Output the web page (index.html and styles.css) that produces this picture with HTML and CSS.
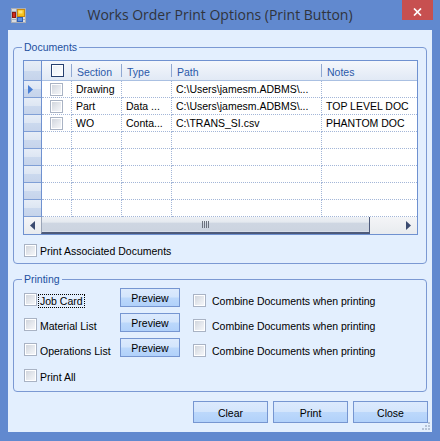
FILE: index.html
```html
<!DOCTYPE html>
<html>
<head>
<meta charset="utf-8">
<title>Works Order Print Options (Print Button)</title>
<link rel="stylesheet" href="styles.css">
</head>
<body>
<div class="window">
  <div class="titlebar">
    <div class="tleft">
      <svg class="appicon" width="15" height="15" viewBox="0 0 15 15">
        <rect x="0.5" y="0.5" width="14" height="14" fill="#d8dbe0" stroke="#a9aeb8"/>
        <line x1="5.5" y1="0.5" x2="5.5" y2="14.5" stroke="#a9aeb8"/>
        <line x1="0.5" y1="11.5" x2="14.5" y2="11.5" stroke="#a9aeb8"/>
        <line x1="0.5" y1="3.5" x2="5.5" y2="3.5" stroke="#a9aeb8"/>
        <rect x="1.5" y="4.5" width="3" height="5" fill="#d22a1e" stroke="#8a1a12"/>
        <rect x="6.5" y="1.5" width="7" height="7" fill="#f6c21c" stroke="#c98a10"/>
        <rect x="7.5" y="2.5" width="4" height="3" fill="#fde27a"/>
        <rect x="6.5" y="9.5" width="5" height="4" fill="#5b8fe0" stroke="#2f5fb8"/>
      </svg>
    </div>
    <div class="title">Works Order Print Options (Print Button)</div>
    <div class="tright">
      <div class="close">
        <svg width="9" height="8" viewBox="0 0 9 8">
          <path d="M1 0.5 L8 7.5 M8 0.5 L1 7.5" stroke="#fff" stroke-width="1.7" fill="none"/>
        </svg>
      </div>
    </div>
  </div>

  <div class="client">
    <div class="group docs">
      <div class="legend">Documents</div>
      <div class="grid">
        <div class="row hdr">
          <div class="c rh"></div>
          <div class="c ck sep"><span class="cb cbh"></span></div>
          <div class="c sec sep">Section</div>
          <div class="c typ sep">Type</div>
          <div class="c pth sep">Path</div>
          <div class="c nts">Notes</div>
        </div>
        <div class="row">
          <div class="c rh"><svg width="5" height="9" viewBox="0 0 5 9"><path d="M0 0 L5 4.5 L0 9 Z" fill="#4a7fd4"/></svg></div>
          <div class="c ck"><span class="cb"></span></div>
          <div class="c sec">Drawing</div>
          <div class="c typ"></div>
          <div class="c pth">C:\Users\jamesm.ADBMS\...</div>
          <div class="c nts"></div>
        </div>
        <div class="row">
          <div class="c rh"></div>
          <div class="c ck"><span class="cb"></span></div>
          <div class="c sec">Part</div>
          <div class="c typ">Data ...</div>
          <div class="c pth">C:\Users\jamesm.ADBMS\...</div>
          <div class="c nts">TOP LEVEL DOC</div>
        </div>
        <div class="row">
          <div class="c rh"></div>
          <div class="c ck"><span class="cb"></span></div>
          <div class="c sec">WO</div>
          <div class="c typ">Conta...</div>
          <div class="c pth">C:\TRANS_SI.csv</div>
          <div class="c nts">PHANTOM DOC</div>
        </div>
        <div class="row"><div class="c rh"></div><div class="c ck"></div><div class="c sec"></div><div class="c typ"></div><div class="c pth"></div><div class="c nts"></div></div>
        <div class="row"><div class="c rh"></div><div class="c ck"></div><div class="c sec"></div><div class="c typ"></div><div class="c pth"></div><div class="c nts"></div></div>
        <div class="row"><div class="c rh"></div><div class="c ck"></div><div class="c sec"></div><div class="c typ"></div><div class="c pth"></div><div class="c nts"></div></div>
        <div class="row"><div class="c rh"></div><div class="c ck"></div><div class="c sec"></div><div class="c typ"></div><div class="c pth"></div><div class="c nts"></div></div>
        <div class="row"><div class="c rh"></div><div class="c ck"></div><div class="c sec"></div><div class="c typ"></div><div class="c pth"></div><div class="c nts"></div></div>
        <div class="hscroll">
          <div class="sbtn"><svg width="5" height="9" viewBox="0 0 5 9"><path d="M5 0 L0 4.5 L5 9 Z" fill="#3b4b70"/></svg></div>
          <div class="thumb">
            <svg width="7" height="7" viewBox="0 0 7 7">
              <rect x="0" y="0" width="1" height="7" fill="#6b717d"/>
              <rect x="2" y="0" width="1" height="7" fill="#6b717d"/>
              <rect x="4" y="0" width="1" height="7" fill="#6b717d"/>
              <rect x="6" y="0" width="1" height="7" fill="#6b717d"/>
            </svg>
          </div>
          <div class="track"><svg width="5" height="9" viewBox="0 0 5 9"><path d="M0 0 L5 4.5 L0 9 Z" fill="#3b4b70"/></svg></div>
        </div>
      </div>
      <div class="assoc">
        <span class="cb"></span><span class="lbl">Print Associated Documents</span>
      </div>
    </div>

    <div class="group printing">
      <div class="legend">Printing</div>
      <div class="prow">
        <div class="opt"><span class="cb"></span><span class="lbl focus">Job Card</span></div>
        <div class="btn prev">Preview</div>
        <div class="opt2"><span class="cb"></span><span class="lbl">Combine Documents when printing</span></div>
      </div>
      <div class="prow">
        <div class="opt"><span class="cb"></span><span class="lbl">Material List</span></div>
        <div class="btn prev">Preview</div>
        <div class="opt2"><span class="cb"></span><span class="lbl">Combine Documents when printing</span></div>
      </div>
      <div class="prow">
        <div class="opt"><span class="cb"></span><span class="lbl">Operations List</span></div>
        <div class="btn prev">Preview</div>
        <div class="opt2"><span class="cb"></span><span class="lbl">Combine Documents when printing</span></div>
      </div>
      <div class="prow last">
        <div class="opt"><span class="cb"></span><span class="lbl">Print All</span></div>
      </div>
    </div>

    <div class="buttons">
      <div class="btn big">Clear</div>
      <div class="btn big">Print</div>
      <div class="btn big">Close</div>
    </div>

    <svg class="grip" width="8" height="8" viewBox="0 0 8 8">
      <rect x="6" y="0" width="2" height="2" fill="#b6c3d6"/>
      <rect x="3" y="3" width="2" height="2" fill="#b6c3d6"/>
      <rect x="6" y="3" width="2" height="2" fill="#b6c3d6"/>
      <rect x="0" y="6" width="2" height="2" fill="#b6c3d6"/>
      <rect x="3" y="6" width="2" height="2" fill="#b6c3d6"/>
      <rect x="6" y="6" width="2" height="2" fill="#b6c3d6"/>
    </svg>
  </div>
</div>
</body>
</html>
```

FILE: styles.css
```css
* { box-sizing: border-box; }
html, body { margin: 0; padding: 0; }
body {
  width: 440px;
  height: 441px;
  overflow: hidden;
  font-family: "Liberation Sans", Arial, sans-serif;
  font-size: 10.5px;
  color: #000;
  background: #6189cf;
}
.window {
  width: 440px;
  height: 441px;
  background: #6189cf;
  display: flex;
  flex-direction: column;
}
.titlebar {
  height: 30px;
  display: grid;
  grid-template-columns: 1fr auto 1fr;
  align-items: start;
}
.appicon { display: block; margin: 8px 0 0 11px; }
.title {
  font-family: "Open Sans", "Noto Sans", sans-serif;
  font-size: 14px;
  line-height: 20px;
  margin-top: 5px;
  color: #30343c;
  white-space: nowrap;
}
.tright { display: flex; justify-content: flex-end; }
.close {
  width: 31px;
  height: 20px;
  margin-right: 7px;
  background: #c75050;
  display: flex;
  justify-content: center;
  padding-top: 8px;
}
.close svg { display: block; }

.client {
  position: relative;
  margin: 0 8px;
  height: 402px;
  background: #e3effe;
  padding: 17px 4px 0 5px;
}

.group {
  position: relative;
  width: 414px;
  border: 1px solid #7b99d3;
  border-radius: 4px;
}
.legend {
  position: absolute;
  top: -7px;
  left: 8px;
  padding: 0 2px;
  background: #e3effe;
  color: #1d4f9e;
  line-height: 13px;
  white-space: nowrap;
}
.docs {
  height: 217px;
  padding: 12px 0 0 9px;
}

/* data grid */
.grid {
  width: 395px;
  border: 1px solid #6f91d0;
  background: #fff;
}
.row {
  display: grid;
  grid-template-columns: 18px 30px 50px 50px 150px 95px;
  height: 17px;
}
.c {
  border-right: 1px dotted #a3b6d8;
  border-bottom: 1px dotted #a3b6d8;
  padding-left: 4px;
  line-height: 16px;
  white-space: nowrap;
  overflow: hidden;
}
.c.nts { border-right: none; }
.c.rh {
  padding: 0;
  border-right: 1px solid #6f91d0;
  border-bottom: 1px solid #7f9fd6;
  background: linear-gradient(#e6edf7 0%, #dde6f3 50%, #cbd9ee 52%, #c6d4eb 100%);
  display: flex;
  align-items: center;
  padding-left: 4px;
}
.c.rh svg { display: block; }
.c.ck {
  padding: 0;
  display: flex;
  justify-content: center;
  align-items: center;
  padding-right: 1px;
}
.row.hdr { height: 20px; }
.row.hdr .c {
  border-right: none;
  border-bottom: 1px solid #aac0e2;
  background: linear-gradient(#f4f7fc, #e1e9f5);
  color: #2b59a8;
  padding: 3px 0 0 5px;
  line-height: 16px;
}
.row.hdr .c.sep {
  background:
    linear-gradient(#8fa8d3, #8fa8d3) right 3px / 1px 13px no-repeat,
    linear-gradient(#f4f7fc, #e1e9f5);
}
.row.hdr .c.ck { padding: 0; }
.row.hdr .c.rh {
  border-right: 1px solid #6f91d0;
  border-bottom: 1px solid #7f9fd6;
  background: linear-gradient(#e6edf7 0%, #dde6f3 50%, #cbd9ee 52%, #c6d4eb 100%);
  padding: 0;
}

/* checkbox */
.cb {
  display: block;
  flex: none;
  width: 13px;
  height: 13px;
  border: 1px solid #a9b3c4;
  background: linear-gradient(135deg, #cdd2da 0%, #e6e9ee 55%, #f8f9fb 100%);
  box-shadow: inset 0 0 0 1px #fff;
}
.cb.cbh {
  border: 1px solid #27406f;
  background: linear-gradient(135deg, #e9eef5, #ffffff);
  box-shadow: inset 0 0 0 1px #fff;
}

/* scrollbar */
.hscroll {
  display: flex;
  height: 17px;
  background: linear-gradient(#f4f5f7, #e8ebef);
}
.sbtn {
  width: 17px;
  display: flex;
  align-items: center;
  padding-left: 6px;
}
.thumb {
  width: 329px;
  display: flex;
  justify-content: center;
  align-items: center;
  border-left: 1px solid #9aa5b8;
  border-right: 1px solid #4d5a7a;
  border-bottom: 2px solid #4d5a7a;
  background: linear-gradient(#eef1f5 0%, #e4e9ef 35%, #ced6e2 40%, #ccd4e0 90%, #dde2ea 100%);
}
.thumb svg { display: block; }
.track {
  width: 47px;
  display: flex;
  align-items: center;
  justify-content: flex-end;
  padding-right: 6px;
}
.sbtn svg, .track svg { display: block; }

/* options */
.assoc {
  display: flex;
  margin: 9px 0 0 1px;
}
.lbl {
  display: block;
  white-space: nowrap;
  margin-left: 1px;
  padding: 0 1px;
  line-height: 12px;
  height: 14px;
  border: 1px dotted transparent;
  margin-top: 0;
}
.assoc .lbl { margin-top: 0; }
.lbl.focus { border-color: #000; }

.printing {
  height: 113px;
  margin-top: 15px;
  padding: 8px 0 0 10px;
}
.prow {
  display: flex;
  align-items: flex-start;
  height: 19px;
  margin-bottom: 6px;
}
.prow:nth-of-type(4) { margin-bottom: 7px; }
.opt {
  display: flex;
  width: 96px;
}
.opt .cb, .opt2 .cb { margin-top: 5px; }
.opt .lbl, .opt2 .lbl { margin-top: 6px; }
.opt2 {
  display: flex;
  margin-left: 13px;
}
.opt2 .cb { margin-top: 6px; }
.opt2 .lbl { margin-left: 4px; }

.btn {
  flex: none;
  border: 1px solid #7696d1;
  background: linear-gradient(#dceafd 0%, #d3e5fc 48%, #bcd8fb 52%, #b1d1fa 100%);
  text-align: center;
  white-space: nowrap;
  color: #000;
}
.btn.prev {
  width: 60px;
  height: 19px;
  padding-top: 1px;
  line-height: 16px;
}
.buttons {
  display: flex;
  justify-content: flex-end;
  gap: 5px;
  margin-top: 9px;
}
.btn.big {
  width: 75px;
  height: 22px;
  padding-top: 3px;
  line-height: 17px;
}
.grip {
  position: absolute;
  right: 2px;
  bottom: 2px;
  display: block;
}
```
